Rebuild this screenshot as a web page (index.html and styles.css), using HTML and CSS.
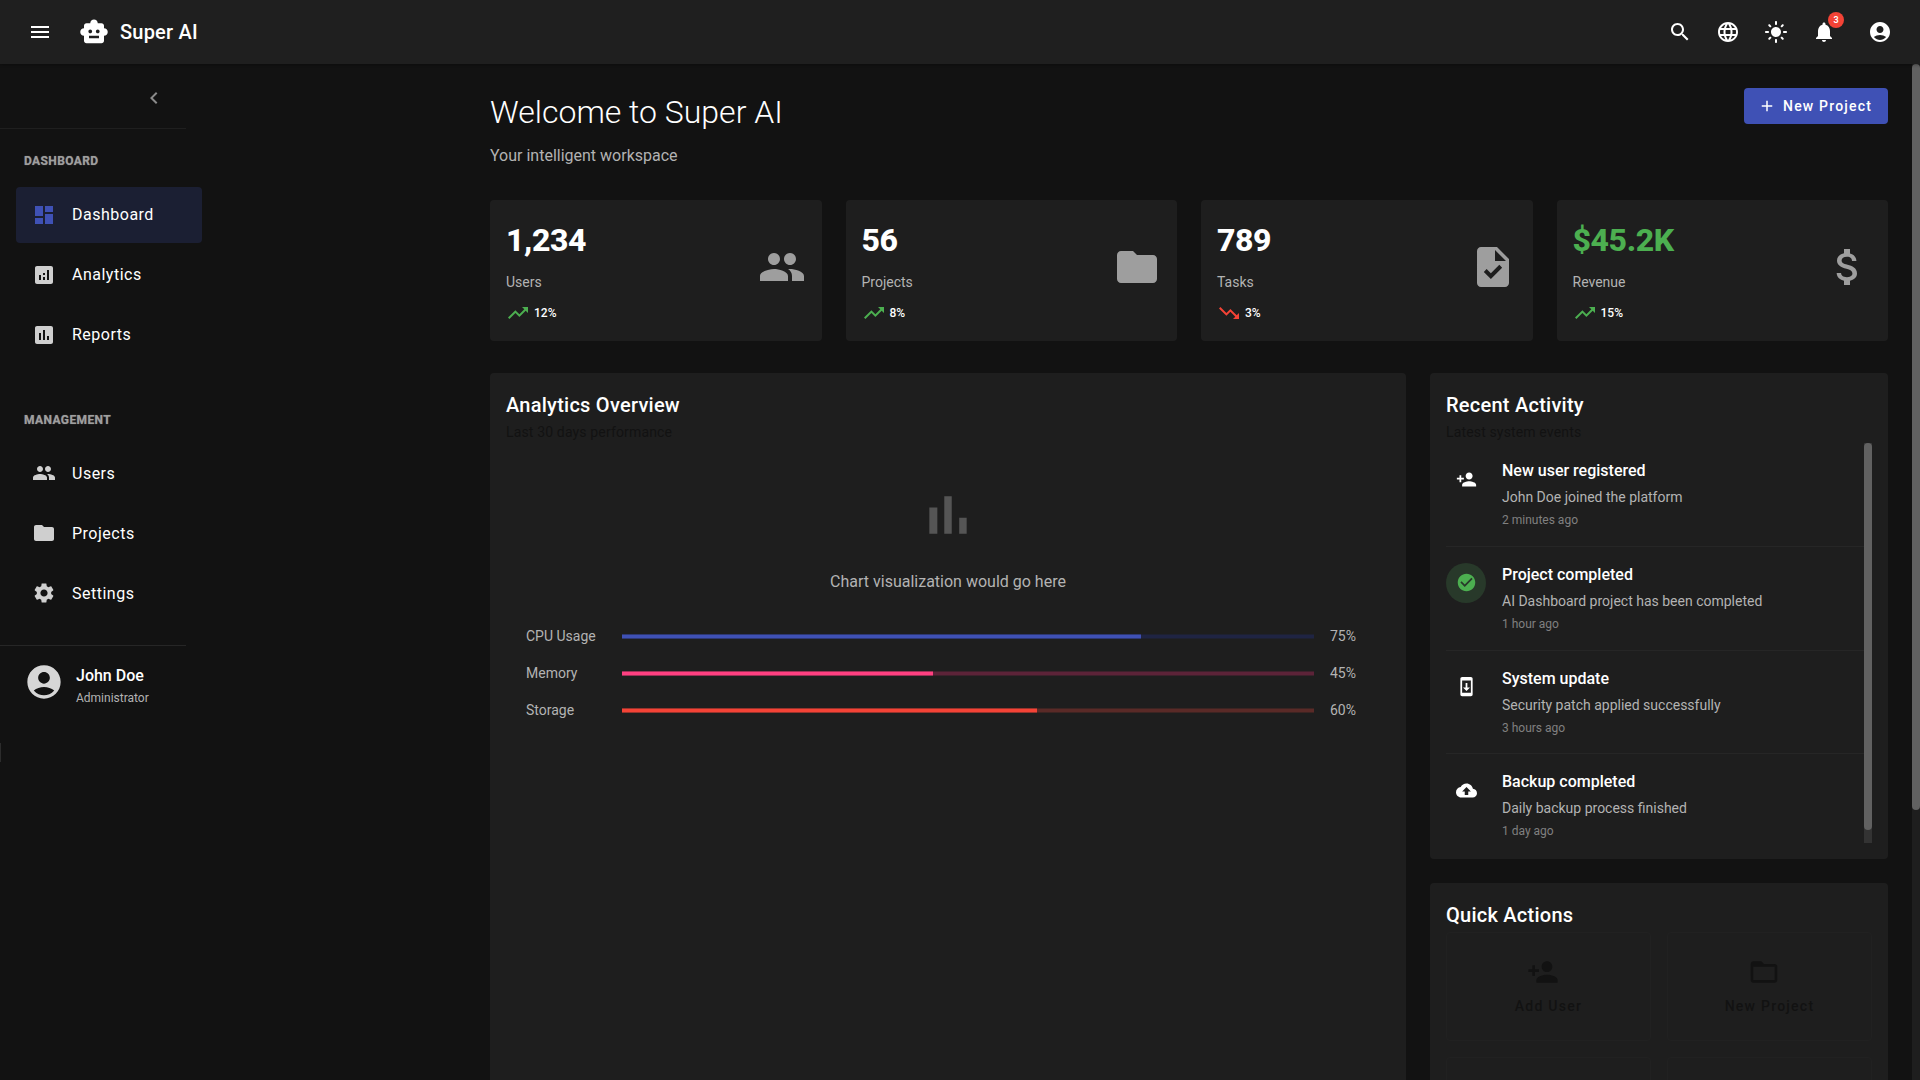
FILE: index.html
```html
<!DOCTYPE html>
<html lang="en">
<head>
    <meta charset="UTF-8">
    <title>Super AI</title>
    <link rel="stylesheet" href="styles.css">
</head>
<body>
    <svg class="sprite" xmlns="http://www.w3.org/2000/svg">
        <symbol id="i-menu" viewBox="0 0 24 24"><path d="M3 18h18v-2H3v2zm0-5h18v-2H3v2zm0-7v2h18V6H3z"/></symbol>
        <symbol id="i-bot" viewBox="0 0 24 24"><path d="M20 9V7c0-1.1-.9-2-2-2h-3c0-1.66-1.34-3-3-3S9 3.34 9 5H6c-1.1 0-2 .9-2 2v2c-1.66 0-3 1.34-3 3s1.34 3 3 3v4c0 1.1.9 2 2 2h12c1.1 0 2-.9 2-2v-4c1.66 0 3-1.34 3-3s-1.34-3-3-3zM7.5 11.5c0-.83.67-1.5 1.5-1.5s1.5.67 1.5 1.5S9.83 13 9 13s-1.5-.67-1.5-1.5zM16 17H8v-2h8v2zm-1-4c-.83 0-1.5-.67-1.5-1.5S14.17 10 15 10s1.5.67 1.5 1.5S15.83 13 15 13z"/></symbol>
        <symbol id="i-search" viewBox="0 0 24 24"><path d="M15.5 14h-.79l-.28-.27C15.41 12.59 16 11.11 16 9.5 16 5.91 13.09 3 9.5 3S3 5.91 3 9.5 5.91 16 9.5 16c1.61 0 3.09-.59 4.23-1.57l.27.28v.79l5 4.99L20.49 19l-4.99-5zm-6 0C7.01 14 5 11.99 5 9.5S7.01 5 9.5 5 14 7.01 14 9.5 11.99 14 9.5 14z"/></symbol>
        <symbol id="i-globe" viewBox="0 0 24 24"><path d="M11.99 2C6.47 2 2 6.48 2 12s4.47 10 9.99 10C17.52 22 22 17.52 22 12S17.52 2 11.99 2zm6.93 6h-2.95c-.32-1.25-.78-2.45-1.38-3.56 1.84.63 3.37 1.91 4.33 3.56zM12 4.04c.83 1.2 1.48 2.53 1.91 3.96h-3.82c.43-1.43 1.08-2.76 1.91-3.96zM4.26 14C4.1 13.36 4 12.69 4 12s.1-1.36.26-2h3.38c-.08.66-.14 1.32-.14 2 0 .68.06 1.34.14 2H4.26zm.82 2h2.95c.32 1.25.78 2.45 1.38 3.56-1.84-.63-3.37-1.9-4.33-3.56zm2.95-8H5.08c.96-1.66 2.49-2.93 4.33-3.56C8.81 5.55 8.35 6.75 8.03 8zM12 19.96c-.83-1.2-1.48-2.53-1.91-3.96h3.82c-.43 1.43-1.08 2.76-1.91 3.96zM14.34 14H9.66c-.09-.66-.16-1.32-.16-2 0-.68.07-1.35.16-2h4.68c.09.65.16 1.32.16 2 0 .68-.07 1.34-.16 2zm.25 5.56c.6-1.11 1.06-2.31 1.38-3.56h2.95c-.96 1.65-2.49 2.93-4.33 3.56zM16.36 14c.08-.66.14-1.32.14-2 0-.68-.06-1.34-.14-2h3.38c.16.64.26 1.31.26 2s-.1 1.36-.26 2h-3.38z"/></symbol>
        <symbol id="i-sun" viewBox="0 0 24 24"><path d="M12 7c-2.76 0-5 2.24-5 5s2.24 5 5 5 5-2.24 5-5-2.24-5-5-5zM2 13h2c.55 0 1-.45 1-1s-.45-1-1-1H2c-.55 0-1 .45-1 1s.45 1 1 1zm18 0h2c.55 0 1-.45 1-1s-.45-1-1-1h-2c-.55 0-1 .45-1 1s.45 1 1 1zM11 2v2c0 .55.45 1 1 1s1-.45 1-1V2c0-.55-.45-1-1-1s-1 .45-1 1zm0 18v2c0 .55.45 1 1 1s1-.45 1-1v-2c0-.55-.45-1-1-1s-1 .45-1 1zM5.99 4.58c-.39-.39-1.03-.39-1.41 0-.39.39-.39 1.03 0 1.41l1.06 1.06c.39.39 1.03.39 1.41 0s.39-1.03 0-1.41L5.99 4.58zm12.37 12.37c-.39-.39-1.03-.39-1.41 0-.39.39-.39 1.03 0 1.41l1.06 1.06c.39.39 1.03.39 1.41 0 .39-.39.39-1.03 0-1.41l-1.06-1.06zm1.06-10.96c.39-.39.39-1.03 0-1.41-.39-.39-1.03-.39-1.41 0l-1.06 1.06c-.39.39-.39 1.03 0 1.41s1.03.39 1.41 0l1.06-1.06zM7.05 18.36c.39-.39.39-1.03 0-1.41-.39-.39-1.03-.39-1.41 0l-1.06 1.06c-.39.39-.39 1.03 0 1.41s1.03.39 1.41 0l1.06-1.06z"/></symbol>
        <symbol id="i-bell" viewBox="0 0 24 24"><path d="M12 22c1.1 0 2-.9 2-2h-4c0 1.1.89 2 2 2zm6-6v-5c0-3.07-1.64-5.64-4.5-6.32V4c0-.83-.67-1.5-1.5-1.5s-1.5.67-1.5 1.5v.68C7.63 5.36 6 7.92 6 11v5l-2 2v1h16v-1l-2-2z"/></symbol>
        <symbol id="i-account" viewBox="0 0 24 24"><path d="M12 2C6.48 2 2 6.48 2 12s4.48 10 10 10 10-4.48 10-10S17.52 2 12 2zm0 4c1.93 0 3.5 1.57 3.5 3.5S13.93 13 12 13s-3.5-1.57-3.5-3.5S10.07 6 12 6zm0 14c-2.03 0-4.43-.82-6.14-2.88C7.55 15.8 9.68 15 12 15s4.45.8 6.14 2.12C16.43 19.18 14.03 20 12 20z"/></symbol>
        <symbol id="i-chevron" viewBox="0 0 24 24"><path d="M15.41 7.41L14 6l-6 6 6 6 1.41-1.41L10.83 12z"/></symbol>
        <symbol id="i-dashboard" viewBox="0 0 24 24"><path d="M3 13h8V3H3v10zm0 8h8v-6H3v6zm10 0h8V11h-8v10zm0-18v6h8V3h-8z"/></symbol>
        <symbol id="i-analytics" viewBox="0 0 24 24"><path d="M19 3H5c-1.1 0-2 .9-2 2v14c0 1.1.9 2 2 2h14c1.1 0 2-.9 2-2V5c0-1.1-.9-2-2-2zM9 17H7v-5h2v5zm4 0h-2v-3h2v3zm0-5h-2v-2h2v2zm4 5h-2V7h2v10z"/></symbol>
        <symbol id="i-reports" viewBox="0 0 24 24"><path d="M19 3H5c-1.1 0-2 .9-2 2v14c0 1.1.9 2 2 2h14c1.1 0 2-.9 2-2V5c0-1.1-.9-2-2-2zM9 17H7v-7h2v7zm4 0h-2V7h2v10zm4 0h-2v-4h2v4z"/></symbol>
        <symbol id="i-people" viewBox="0 0 24 24"><path d="M16 11c1.66 0 2.99-1.34 2.99-3S17.66 5 16 5c-1.66 0-3 1.34-3 3s1.34 3 3 3zm-8 0c1.66 0 2.99-1.34 2.99-3S9.66 5 8 5C6.34 5 5 6.34 5 8s1.34 3 3 3zm0 2c-2.33 0-7 1.17-7 3.5V19h14v-2.5c0-2.33-4.67-3.5-7-3.5zm8 0c-.29 0-.62.02-.97.05 1.16.84 1.97 1.97 1.97 3.45V19h6v-2.5c0-2.33-4.67-3.5-7-3.5z"/></symbol>
        <symbol id="i-folder" viewBox="0 0 24 24"><path d="M10 4H4c-1.1 0-1.99.9-1.99 2L2 18c0 1.1.9 2 2 2h16c1.1 0 2-.9 2-2V8c0-1.1-.9-2-2-2h-8l-2-2z"/></symbol>
        <symbol id="i-folder-open" viewBox="0 0 24 24"><path d="M20 6h-8l-2-2H4c-1.1 0-1.99.9-1.99 2L2 18c0 1.1.9 2 2 2h16c1.1 0 2-.9 2-2V8c0-1.1-.9-2-2-2zm0 12H4V8h16v10z"/></symbol>
        <symbol id="i-settings" viewBox="0 0 24 24"><path d="M19.14 12.94c.04-.3.06-.61.06-.94 0-.32-.02-.64-.07-.94l2.03-1.58c.18-.14.23-.41.12-.61l-1.92-3.32c-.12-.22-.37-.29-.59-.22l-2.39.96c-.5-.38-1.03-.7-1.62-.94l-.36-2.54c-.04-.24-.24-.41-.48-.41h-3.84c-.24 0-.43.17-.47.41l-.36 2.54c-.59.24-1.13.57-1.62.94l-2.39-.96c-.22-.08-.47 0-.59.22L2.74 8.87c-.12.21-.08.47.12.61l2.03 1.58c-.05.3-.09.63-.09.94s.02.64.07.94l-2.03 1.58c-.18.14-.23.41-.12.61l1.92 3.32c.12.22.37.29.59.22l2.39-.96c.5.38 1.03.7 1.62.94l.36 2.54c.05.24.24.41.48.41h3.84c.24 0 .44-.17.47-.41l.36-2.54c.59-.24 1.13-.56 1.62-.94l2.39.96c.22.08.47 0 .59-.22l1.92-3.32c.12-.22.07-.47-.12-.61l-2.01-1.58zM12 15.6c-1.98 0-3.6-1.62-3.6-3.6s1.62-3.6 3.6-3.6 3.6 1.62 3.6 3.6-1.62 3.6-3.6 3.6z"/></symbol>
        <symbol id="i-add" viewBox="0 0 24 24"><path d="M19 13h-6v6h-2v-6H5v-2h6V5h2v6h6v2z"/></symbol>
        <symbol id="i-up" viewBox="0 0 24 24"><path d="M16 6l2.29 2.29-4.88 4.88-4-4L2 16.59 3.41 18l6-6 4 4 6.3-6.29L22 12V6z"/></symbol>
        <symbol id="i-down" viewBox="0 0 24 24"><path d="M16 18l2.29-2.29-4.88-4.88-4 4L2 7.41 3.41 6l6 6 4-4 6.3 6.29L22 12v6z"/></symbol>
        <symbol id="i-task" viewBox="0 0 24 24"><path d="M14 2H6c-1.1 0-1.99.9-1.99 2L4 20c0 1.1.89 2 1.99 2H18c1.1 0 2-.9 2-2V8l-6-6zm-3.06 16L7.4 14.46l1.41-1.41 2.12 2.12 4.24-4.24 1.41 1.41L10.94 18zM13 9V3.5L18.5 9H13z"/></symbol>
        <symbol id="i-money" viewBox="0 0 24 24"><path d="M11.8 10.9c-2.27-.59-3-1.2-3-2.15 0-1.09 1.01-1.85 2.7-1.85 1.78 0 2.44.85 2.5 2.1h2.21c-.07-1.72-1.12-3.3-3.21-3.81V3h-3v2.16c-1.94.42-3.5 1.68-3.5 3.61 0 2.31 1.91 3.46 4.7 4.13 2.5.6 3 1.48 3 2.41 0 .69-.49 1.79-2.7 1.79-2.06 0-2.87-.92-2.98-2.1h-2.2c.12 2.19 1.76 3.42 3.68 3.83V21h3v-2.15c1.95-.37 3.5-1.5 3.5-3.55 0-2.84-2.43-3.81-4.7-4.4z"/></symbol>
        <symbol id="i-chart" viewBox="0 0 24 24"><path d="M5 9.2h3V19H5zM10.6 5h2.8v14h-2.8zm5.6 8H19v6h-2.8z"/></symbol>
        <symbol id="i-person-add" viewBox="0 0 24 24"><path d="M15 12c2.21 0 4-1.79 4-4s-1.79-4-4-4-4 1.79-4 4 1.79 4 4 4zm-9-2V7H4v3H1v2h3v3h2v-3h3v-2H6zm9 4c-2.67 0-8 1.34-8 4v2h16v-2c0-2.66-5.33-4-8-4z"/></symbol>
        <symbol id="i-check" viewBox="0 0 24 24"><path d="M12 2C6.48 2 2 6.48 2 12s4.48 10 10 10 10-4.48 10-10S17.52 2 12 2zm-2 15l-5-5 1.41-1.41L10 14.17l7.59-7.59L19 8l-9 9z"/></symbol>
        <symbol id="i-update" viewBox="0 0 24 24"><path d="M17 1.01L7 1c-1.1 0-2 .9-2 2v18c0 1.1.9 2 2 2h10c1.1 0 2-.9 2-2V3c0-1.1-.9-1.99-2-1.99zM17 19H7V5h10v14zm-1-6h-3V8h-2v5H8l4 4 4-4z"/></symbol>
        <symbol id="i-cloud" viewBox="0 0 24 24"><path d="M19.35 10.04C18.67 6.59 15.64 4 12 4 9.11 4 6.6 5.64 5.35 8.04 2.34 8.36 0 10.91 0 14c0 3.31 2.69 6 6 6h13c2.76 0 5-2.24 5-5 0-2.64-2.05-4.78-4.65-4.96zM14 13v4h-4v-4H7l5-5 5 5h-3z"/></symbol>
    </svg>

    <header class="toolbar">
        <button class="icon-btn menu-btn"><svg class="icon"><use href="#i-menu"/></svg></button>
        <svg class="logo"><use href="#i-bot"/></svg>
        <span class="brand">Super AI</span>
        <div class="toolbar-actions">
            <button class="icon-btn"><svg class="icon"><use href="#i-search"/></svg></button>
            <button class="icon-btn"><svg class="icon"><use href="#i-globe"/></svg></button>
            <button class="icon-btn"><svg class="icon"><use href="#i-sun"/></svg></button>
            <button class="icon-btn">
                <svg class="icon"><use href="#i-bell"/></svg>
                <span class="badge">3</span>
            </button>
            <button class="icon-btn account-btn"><svg class="icon"><use href="#i-account"/></svg></button>
        </div>
    </header>

    <div class="shell">
        <aside class="sidebar">
            <div class="collapse-row">
                <svg class="collapse-icon"><use href="#i-chevron"/></svg>
            </div>
            <nav class="nav">
                <div class="nav-title">Dashboard</div>
                <a class="nav-item active"><svg class="icon"><use href="#i-dashboard"/></svg>Dashboard</a>
                <a class="nav-item"><svg class="icon"><use href="#i-analytics"/></svg>Analytics</a>
                <a class="nav-item"><svg class="icon"><use href="#i-reports"/></svg>Reports</a>
                <div class="nav-title second">Management</div>
                <a class="nav-item"><svg class="icon"><use href="#i-people"/></svg>Users</a>
                <a class="nav-item"><svg class="icon"><use href="#i-folder"/></svg>Projects</a>
                <a class="nav-item"><svg class="icon"><use href="#i-settings"/></svg>Settings</a>
            </nav>
            <div class="user-box">
                <svg class="user-avatar"><use href="#i-account"/></svg>
                <div class="user-text">
                    <div class="user-name">John Doe</div>
                    <div class="user-role">Administrator</div>
                </div>
            </div>
            <div class="edge-mark"></div>
        </aside>

        <main class="main">
            <div class="page">
                <div class="page-head">
                    <div>
                        <h1>Welcome to Super AI</h1>
                        <p class="page-sub">Your intelligent workspace</p>
                    </div>
                    <button class="primary-btn"><svg class="btn-icon"><use href="#i-add"/></svg>New Project</button>
                </div>

                <section class="stats">
                    <div class="card stat">
                        <div>
                            <div class="stat-value">1,234</div>
                            <div class="stat-label">Users</div>
                            <div class="stat-trend"><svg class="icon up"><use href="#i-up"/></svg>12%</div>
                        </div>
                        <svg class="stat-icon"><use href="#i-people"/></svg>
                    </div>
                    <div class="card stat">
                        <div>
                            <div class="stat-value">56</div>
                            <div class="stat-label">Projects</div>
                            <div class="stat-trend"><svg class="icon up"><use href="#i-up"/></svg>8%</div>
                        </div>
                        <svg class="stat-icon"><use href="#i-folder"/></svg>
                    </div>
                    <div class="card stat">
                        <div>
                            <div class="stat-value">789</div>
                            <div class="stat-label">Tasks</div>
                            <div class="stat-trend"><svg class="icon down"><use href="#i-down"/></svg>3%</div>
                        </div>
                        <svg class="stat-icon"><use href="#i-task"/></svg>
                    </div>
                    <div class="card stat">
                        <div>
                            <div class="stat-value green">$45.2K</div>
                            <div class="stat-label">Revenue</div>
                            <div class="stat-trend"><svg class="icon up"><use href="#i-up"/></svg>15%</div>
                        </div>
                        <svg class="stat-icon"><use href="#i-money"/></svg>
                    </div>
                </section>

                <section class="columns">
                    <div class="card panel">
                        <h2>Analytics Overview</h2>
                        <div class="panel-sub">Last 30 days performance</div>
                        <div class="chart-holder">
                            <svg class="chart-icon"><use href="#i-chart"/></svg>
                            <p class="chart-text">Chart visualization would go here</p>
                        </div>
                        <div class="metrics">
                            <div class="metric">
                                <span>CPU Usage</span>
                                <div class="track blue"><div class="fill" style="width: 75%"></div></div>
                                <span>75%</span>
                            </div>
                            <div class="metric">
                                <span>Memory</span>
                                <div class="track pink"><div class="fill" style="width: 45%"></div></div>
                                <span>45%</span>
                            </div>
                            <div class="metric">
                                <span>Storage</span>
                                <div class="track red"><div class="fill" style="width: 60%"></div></div>
                                <span>60%</span>
                            </div>
                        </div>
                    </div>

                    <div class="side-col">
                        <div class="card panel">
                            <h2>Recent Activity</h2>
                            <div class="panel-sub">Latest system events</div>
                            <div class="activity-wrap">
                                <div class="activity">
                                    <div class="activity-item">
                                        <div class="activity-icon"><svg class="small-icon"><use href="#i-person-add"/></svg></div>
                                        <div>
                                            <div class="activity-title">New user registered</div>
                                            <div class="activity-text">John Doe joined the platform</div>
                                            <div class="activity-time">2 minutes ago</div>
                                        </div>
                                    </div>
                                    <div class="activity-item">
                                        <div class="activity-icon done"><svg class="small-icon"><use href="#i-check"/></svg></div>
                                        <div>
                                            <div class="activity-title">Project completed</div>
                                            <div class="activity-text">AI Dashboard project has been completed</div>
                                            <div class="activity-time">1 hour ago</div>
                                        </div>
                                    </div>
                                    <div class="activity-item">
                                        <div class="activity-icon"><svg class="small-icon"><use href="#i-update"/></svg></div>
                                        <div>
                                            <div class="activity-title">System update</div>
                                            <div class="activity-text">Security patch applied successfully</div>
                                            <div class="activity-time">3 hours ago</div>
                                        </div>
                                    </div>
                                    <div class="activity-item">
                                        <div class="activity-icon"><svg class="small-icon"><use href="#i-cloud"/></svg></div>
                                        <div>
                                            <div class="activity-title">Backup completed</div>
                                            <div class="activity-text">Daily backup process finished</div>
                                            <div class="activity-time">1 day ago</div>
                                        </div>
                                    </div>
                                </div>
                                <div class="bar list-bar"><div class="bar-thumb"></div></div>
                            </div>
                        </div>

                        <div class="card panel">
                            <h2>Quick Actions</h2>
                            <div class="actions">
                                <button class="action"><svg class="action-icon"><use href="#i-person-add"/></svg>Add User</button>
                                <button class="action"><svg class="action-icon"><use href="#i-folder-open"/></svg>New Project</button>
                                <button class="action"></button>
                                <button class="action"></button>
                            </div>
                        </div>
                    </div>
                </section>
            </div>
        </main>
        <div class="bar page-bar"><div class="bar-thumb"></div></div>
    </div>
</body>
</html>
```

FILE: styles.css
```css
* {
    box-sizing: border-box;
}
html, body {
    height: 100%;
}
body {
    margin: 0;
    display: flex;
    flex-direction: column;
    overflow: hidden;
    background-color: #121212;
    color: #fff;
    font-family: Roboto, "Liberation Sans", sans-serif;
}
button {
    font-family: inherit;
    border: none;
    background: none;
    color: inherit;
    padding: 0;
}
h1, h2, p {
    margin: 0;
    font-weight: normal;
}
.sprite {
    display: none;
}
.icon {
    width: 24px;
    height: 24px;
    fill: currentColor;
    flex: none;
}

/* toolbar */
.toolbar {
    height: 64px;
    flex: none;
    display: flex;
    align-items: center;
    padding: 0 16px 0 20px;
    background-color: #1f1f1f;
    box-shadow: 0 1px 3px rgba(0, 0, 0, 0.3);
    position: relative;
    z-index: 2;
}
.icon-btn {
    position: relative;
    width: 48px;
    height: 48px;
    display: flex;
    align-items: center;
    justify-content: center;
}
.menu-btn {
    width: 40px;
}
.logo {
    width: 30px;
    height: 30px;
    fill: #fff;
    margin-left: 19px;
    margin-right: 11px;
}
.brand {
    font-size: 20px;
    font-weight: 500;
    letter-spacing: 0.2px;
}
.toolbar-actions {
    margin-left: auto;
    display: flex;
    align-items: center;
}
.account-btn {
    margin-left: 8px;
}
.badge {
    position: absolute;
    top: 4px;
    right: 4px;
    width: 16px;
    height: 16px;
    border-radius: 50%;
    background-color: #f44336;
    font-size: 9px;
    font-weight: 600;
    line-height: 16px;
    text-align: center;
}

/* sidebar */
.shell {
    position: relative;
    flex: 1;
    display: flex;
    min-height: 0;
}
.sidebar {
    position: relative;
    width: 218px;
    flex: none;
}
.collapse-row {
    width: 186px;
    height: 65px;
    border-bottom: 1px solid #1f1f1f;
    padding: 22px 0 0 142px;
}
.collapse-icon {
    display: block;
    width: 24px;
    height: 24px;
    fill: #8a8a8a;
}
.nav {
    padding: 0 16px 20px;
}
.nav-title {
    height: 58px;
    padding: 24px 0 0 8px;
    font-size: 12px;
    line-height: 16px;
    font-weight: 700;
    letter-spacing: 0.4px;
    text-transform: uppercase;
    color: #9e9e9e;
    text-shadow: 0 0 1px rgba(158, 158, 158, 0.7);
}
.nav-title.second {
    padding-top: 25px;
    margin-top: 24px;
}
.nav-item {
    display: flex;
    align-items: center;
    gap: 16px;
    height: 56px;
    margin-bottom: 4px;
    padding-left: 16px;
    border-radius: 4px;
    font-size: 16px;
    letter-spacing: 0.5px;
    color: #fff;
}
/* first group sits a pixel higher than its icons */
.nav-item:nth-of-type(-n+3) {
    padding-bottom: 2px;
}
.nav-item:nth-of-type(-n+3) .icon {
    margin-top: 2px;
}
.nav-item .icon {
    color: #cfcfcf;
}
.nav-item.active {
    background-color: #1b1f33;
}
.nav-item.active .icon {
    color: #3f51b5;
}
.user-box {
    width: 186px;
    border-top: 1px solid #262626;
    display: flex;
    align-items: flex-start;
    gap: 12px;
    padding: 16px 0 0 24px;
}
.user-avatar {
    width: 40px;
    height: 40px;
    fill: #d6d6d6;
    flex: none;
}
.user-text {
    margin-top: 2px;
}
.user-name {
    font-size: 16px;
    font-weight: 500;
    line-height: 24px;
}
.user-role {
    font-size: 12px;
    line-height: 20px;
    color: #b3b3b3;
}
.edge-mark {
    position: absolute;
    left: 0;
    top: 679px;
    width: 1px;
    height: 19px;
    background-color: #2c2c2c;
}

/* main */
.main {
    flex: 1;
    min-width: 0;
    overflow-y: auto;
    scrollbar-width: none;
    padding: 24px 32px 0 272px;
}
.bar {
    position: absolute;
    right: 0;
    top: 0;
    bottom: 0;
    width: 8px;
}
.page-bar {
    background-color: #1e1e1e;
}
.page-bar .bar-thumb {
    height: 746px;
}
.list-bar {
    background-color: #333;
}
.list-bar .bar-thumb {
    height: 387px;
}
.bar-thumb {
    background-color: #616161;
    border-radius: 4px;
}
.page {
    min-height: 1360px;
}
.page-head {
    display: flex;
    justify-content: space-between;
    align-items: flex-start;
    height: 88px;
    margin-bottom: 24px;
}
h1 {
    font-size: 32px;
    font-weight: 300;
    line-height: 48px;
}
.page-sub {
    margin-top: 8px;
    font-size: 16px;
    line-height: 24px;
    color: #b3b3b3;
}
.primary-btn {
    display: flex;
    align-items: center;
    width: 144px;
    height: 36px;
    padding-left: 14px;
    border-radius: 4px;
    background-color: #3f51b5;
    font-size: 14px;
    font-weight: 500;
    letter-spacing: 1.2px;
}
.btn-icon {
    width: 18px;
    height: 18px;
    fill: #fff;
    margin-right: 7px;
}
.card {
    background-color: #1e1e1e;
    border-radius: 4px;
}
.stats {
    display: grid;
    grid-template-columns: repeat(4, 1fr);
    gap: 24px;
    margin-bottom: 32px;
}
.stat {
    display: flex;
    justify-content: space-between;
    align-items: center;
    padding: 16px;
}
.stat-value {
    font-size: 32px;
    font-weight: 800;
    line-height: 48px;
    letter-spacing: -0.4px;
}
.stat-value.green {
    color: #4caf50;
}
.stat-label {
    margin-top: 8px;
    font-size: 14px;
    line-height: 20px;
    color: #b3b3b3;
}
.stat-trend {
    display: flex;
    align-items: center;
    gap: 4px;
    margin-top: 9px;
    font-size: 12px;
    font-weight: 500;
}
.stat-trend .up {
    color: #4caf50;
}
.stat-trend .down {
    color: #f44336;
}
.stat-icon {
    width: 48px;
    height: 48px;
    fill: #9e9e9e;
    margin-bottom: 7px;
}
.columns {
    display: grid;
    grid-template-columns: 2fr 1fr;
    gap: 24px;
}
.panel {
    padding: 16px;
}
h2 {
    font-size: 20px;
    font-weight: 500;
    line-height: 32px;
    letter-spacing: 0.25px;
}
.panel-sub {
    font-size: 14px;
    line-height: 22px;
    letter-spacing: 0.15px;
    color: #121212;
}

/* chart */
.chart-holder {
    padding-top: 40px;
    text-align: center;
}
.chart-icon {
    display: block;
    width: 64px;
    height: 64px;
    margin: 0 auto 23px;
    fill: #555;
}
.chart-text {
    font-size: 16px;
    line-height: 24px;
    color: #b3b3b3;
}
.metrics {
    padding: 23px 20px 0;
}
.metric {
    display: grid;
    grid-template-columns: 80px 1fr 40px;
    gap: 16px;
    align-items: center;
    height: 37px;
    font-size: 14px;
    color: #b3b3b3;
}
.track {
    height: 4px;
    transform: translateY(0.5px);
}
.fill {
    height: 100%;
}
.blue {
    background-color: #1f2443;
}
.blue .fill {
    background-color: #3f51b5;
}
.pink {
    background-color: #5c2338;
}
.pink .fill {
    background-color: #ff4081;
}
.red {
    background-color: #5a2a27;
}
.red .fill {
    background-color: #f44336;
}

/* right column */
.side-col {
    display: flex;
    flex-direction: column;
    gap: 24px;
}
.activity-wrap {
    position: relative;
    padding-right: 8px;
}
.activity {
    height: 400px;
    overflow-y: auto;
    scrollbar-width: none;
}
.activity-item {
    display: flex;
    gap: 16px;
    padding: 16px 0;
    border-bottom: 1px solid #262626;
}
.activity-item:last-child {
    border-bottom: 0;
}
.activity-icon {
    width: 40px;
    height: 40px;
    flex: none;
    display: flex;
    align-items: center;
    justify-content: center;
    border-radius: 50%;
}
.activity-icon.done {
    background-color: #28392a;
    color: #4caf50;
}
.small-icon {
    width: 21px;
    height: 21px;
    fill: currentColor;
}
.activity-title {
    font-size: 16px;
    font-weight: 500;
    line-height: 24px;
    margin-bottom: 4px;
}
.activity-text {
    font-size: 14px;
    line-height: 20px;
    margin-bottom: 4px;
    color: #b3b3b3;
}
.activity-time {
    font-size: 12px;
    line-height: 18.8px;
    color: #808080;
}
.actions {
    display: grid;
    grid-template-columns: 1fr 1fr;
    gap: 16px;
    margin-top: 1px;
}
.action {
    height: 109px;
    display: flex;
    flex-direction: column;
    align-items: center;
    padding-top: 23px;
    border: 1px solid #212121;
    border-radius: 4px;
    font-size: 14px;
    font-weight: 500;
    line-height: 20px;
    letter-spacing: 1.25px;
    color: #121212;
}
.action-icon {
    width: 32px;
    height: 32px;
    fill: #121212;
    margin: 0 12px 8px 0;
}
```
